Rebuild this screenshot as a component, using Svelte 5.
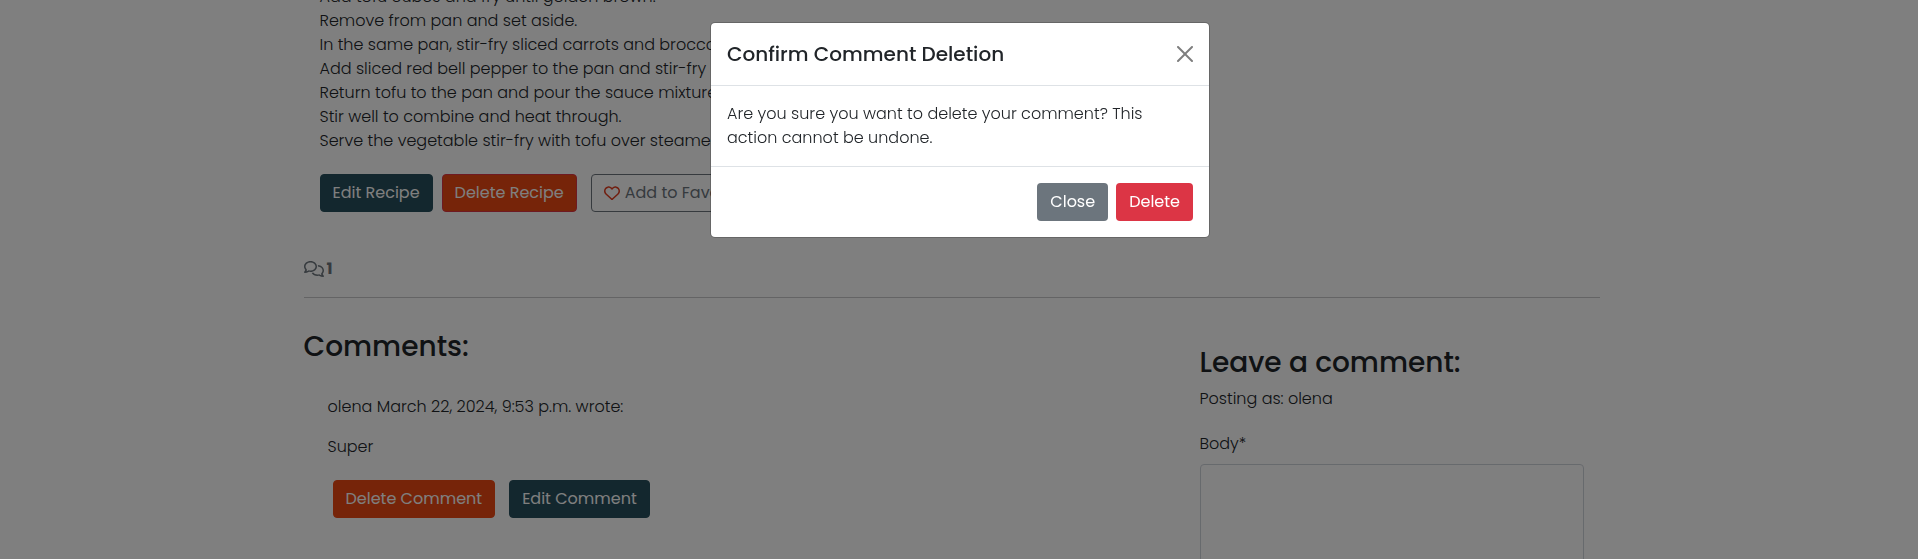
<script>
  const steps = [
    'Add tofu cubes and fry until golden brown.',
    'Remove from pan and set aside.',
    'In the same pan, stir-fry sliced carrots and broccoli.',
    'Add sliced red bell pepper to the pan and stir-fry again.',
    'Return tofu to the pan and pour the sauce mixture over.',
    'Stir well to combine and heat through.',
    'Serve the vegetable stir-fry with tofu over steamed rice.'
  ];
  let open = $state(true);
  let body = $state('');
  const close = () => (open = false);
</script>

<div class="page">
  <main class="container">
    <section class="recipe">
      {#each steps as step}
        <p>{step}</p>
      {/each}
      <div class="actions">
        <button class="btn teal">Edit Recipe</button>
        <button class="btn orange outlined">Delete Recipe</button>
        <button class="btn outline">
          <svg class="heart" viewBox="0 0 512 512" aria-hidden="true"><path d="M225.8 468.2l-2.5-2.3L48.1 303.2C17.4 274.7 0 234.7 0 192.8v-3.3c0-70.4 50-130.8 119.2-144C158.6 37.9 198.9 47 231 69.6c9 6.4 17.4 13.8 25 22.3c4.2-4.8 8.7-9.2 13.5-13.3c3.7-3.2 7.5-6.2 11.5-9C313.1 47 353.4 37.9 392.8 45.4C462 58.6 512 119.1 512 189.5v3.3c0 41.9-17.4 81.9-48.1 110.4L288.7 465.9l-2.5 2.3c-8.2 7.6-19 11.9-30.2 11.9s-22-4.2-30.2-11.9zM239.1 145c-.4-.3-.7-.7-1-1.1l-17.8-20l-.1-.1c-23.1-25.9-58-37.7-92-31.2C81.6 101.5 48 142.1 48 189.5v3.3c0 28.5 11.9 55.8 32.8 75.2L256 430.7 431.2 268c20.9-19.4 32.8-46.7 32.8-75.2v-3.3c0-47.3-33.6-88-80.1-96.9c-34-6.5-69 5.4-92 31.2l-.1 .1l-17.8 20c-.3 .4-.7 .7-1 1.1c-4.5 4.5-10.6 7-16.9 7s-12.4-2.5-16.9-7z" /></svg>
          Add to Favourites
        </button>
      </div>
    </section>

    <div class="count">
      <svg class="bubbles" viewBox="0 0 640 512" aria-hidden="true"><path d="M88.2 309.1c9.8-18.3 6.8-40.8-7.5-55.8C59.4 230.9 48 204 48 176c0-63.5 63.8-128 160-128s160 64.5 160 128s-63.8 128-160 128c-13.1 0-25.8-1.3-37.8-3.6c-10.4-2-21.2-.6-30.7 4.2c-4.1 2.1-8.3 4.1-12.6 6c-16 7.2-32.9 13.5-49.9 18c2.8-4.6 5.4-9.1 7.9-13.6c1.1-1.9 2.2-3.9 3.2-5.9zM0 176c0 41.8 17.2 80.1 45.9 110.3c-.9 1.7-1.9 3.5-2.8 5.1c-10.3 18.4-22.3 36.5-36.6 52.1c-6.6 7-8.3 17.2-4.6 25.9C5.8 378.3 14.4 384 24 384c43 0 86.5-13.3 122.7-29.7c4.8-2.2 9.6-4.5 14.2-6.8c15.1 3 30.9 4.5 47.1 4.5c114.9 0 208-78.8 208-176S322.9 0 208 0S0 78.8 0 176zM432 480c16.2 0 31.9-1.6 47.1-4.5c4.6 2.3 9.4 4.6 14.2 6.8C529.5 498.7 573 512 616 512c9.6 0 18.2-5.7 22-14.5c3.8-8.8 2-19-4.6-25.9c-14.2-15.6-26.2-33.7-36.6-52.1c-.9-1.7-1.9-3.4-2.8-5.1C622.8 384.1 640 345.8 640 304c0-94.4-87.9-171.5-198.2-175.8c4.1 15.2 6.2 31.2 6.2 47.8l0 .6c87.2 6.7 144 67.5 144 127.4c0 28-11.4 54.9-32.7 77.2c-14.3 15-17.3 37.6-7.5 55.8c1.1 2 2.2 4 3.2 5.9c2.5 4.5 5.2 9 7.9 13.6c-17-4.5-33.9-10.7-49.9-18c-4.3-1.9-8.5-3.9-12.6-6c-9.5-4.8-20.3-6.2-30.7-4.2c-12.1 2.4-24.8 3.6-37.8 3.6c-61.7 0-110-26.5-136.8-62.3c-16 5.4-32.8 9.4-50 11.8C279 439.8 350 480 432 480z" /></svg>
      <strong>1</strong>
    </div>
    <hr />

    <div class="row">
      <section class="comments">
        <h3>Comments:</h3>
        <article>
          <p>olena March 22, 2024, 9:53 p.m. wrote:</p>
          <p>Super</p>
          <div class="comment-actions">
            <button class="btn orange" onclick={() => (open = true)}>Delete Comment</button>
            <button class="btn teal">Edit Comment</button>
          </div>
        </article>
      </section>
      <form class="leave">
        <h3>Leave a comment:</h3>
        <p>Posting as: olena</p>
        <label for="body">Body*</label>
        <textarea id="body" rows="10" bind:value={body}></textarea>
      </form>
    </div>
  </main>
</div>

{#if open}
  <div class="backdrop">
    <div class="modal" role="dialog" aria-modal="true" aria-labelledby="modal-title">
      <header>
        <h5 id="modal-title">Confirm Comment Deletion</h5>
        <button class="x" aria-label="Close dialog" onclick={close}>
          <svg viewBox="0 0 16 16" aria-hidden="true"><path d="M.293.293a1 1 0 0 1 1.414 0L8 6.586 14.293.293a1 1 0 1 1 1.414 1.414L9.414 8l6.293 6.293a1 1 0 0 1-1.414 1.414L8 9.414l-6.293 6.293a1 1 0 0 1-1.414-1.414L6.586 8 .293 1.707a1 1 0 0 1 0-1.414z" /></svg>
        </button>
      </header>
      <div class="modal-body">
        Are you sure you want to delete your comment? This action cannot be undone.
      </div>
      <footer>
        <button class="btn grey" onclick={close}>Close</button>
        <button class="btn red">Delete</button>
      </footer>
    </div>
  </div>
{/if}

<style>
  :global(body) {
    margin: 0;
    background: #fff;
    color: #212529;
    font: 300 16px/24px Poppins, Inter, sans-serif;
  }
  .page, .page *, .backdrop, .backdrop * { box-sizing: border-box; }
  .page {
    height: 100vh;
    overflow: hidden;
    padding-right: 15px;
  }
  .container {
    max-width: 1320px;
    margin: -15px auto 0;
    padding: 0 12px;
  }
  p, h3, h5 { margin: 0; }
  h3 { font-size: 28px; line-height: 34px; font-weight: 500; }
  .recipe { padding: 0 16px; }
  .actions { display: flex; gap: 9px; margin-top: 21px; }
  .btn {
    height: 38px;
    padding: 0 12px;
    border: 1px solid transparent;
    border-radius: 4px;
    color: #fff;
    font: 400 16px/24px Poppins, Inter, sans-serif;
    white-space: nowrap;
    cursor: pointer;
  }
  .teal { background: #264e5c; border-color: #264e5c; }
  .orange { background: #ec4812; border-color: #ec4812; }
  .outlined { border-color: #dc3545; }
  .outline {
    display: flex;
    align-items: center;
    gap: 5px;
    margin-left: 5px;
    background: transparent;
    border-color: #6c757d;
    color: #6c757d;
  }
  .grey { background: #6c757d; }
  .red { background: #dc3545; }
  .heart { width: 16px; height: 16px; fill: #e23c1e; }
  .count {
    display: flex;
    align-items: center;
    gap: 3px;
    margin-top: 45px;
    color: #6c757d;
  }
  .count strong { font-weight: 700; }
  .bubbles { width: 20px; height: 16px; fill: currentColor; }
  hr {
    height: 1px;
    margin: 16px 0 0;
    border: 0;
    background: #c8c9ca;
  }
  .row { display: grid; grid-template-columns: 2fr 1fr; }
  .comments { padding-top: 32px; }
  article { padding: 31px 24px 0; }
  article p { margin-bottom: 16px; }
  .comment-actions { display: flex; gap: 14px; padding: 5px 5px 0; }
  .leave { padding: 48px 16px 0 32px; }
  .leave p { margin-top: 7px; }
  .leave label { display: block; margin: 21px 0 8px; }
  textarea {
    display: block;
    width: 100%;
    padding: 6px 12px;
    border: 1px solid #ced4da;
    border-radius: 4px;
    background: #fff;
    font: inherit;
    resize: vertical;
  }
  .backdrop {
    position: fixed;
    inset: 0;
    padding: 22px 0 0 2px;
    background: rgba(0, 0, 0, 0.5);
  }
  .modal {
    max-width: 500px;
    margin: 0 auto;
    border: 1px solid rgba(0, 0, 0, 0.2);
    border-radius: 5px;
    background: #fff;
    background-clip: padding-box;
  }
  header, footer { display: flex; align-items: center; padding: 16px; }
  header { justify-content: space-between; border-bottom: 1px solid #dee2e6; }
  h5 { font-size: 20px; line-height: 30px; font-weight: 500; }
  .x {
    display: flex;
    padding: 0;
    border: 0;
    background: none;
    opacity: 0.5;
    cursor: pointer;
  }
  .x svg { width: 16px; height: 16px; }
  .modal-body { padding: 16px; }
  footer { justify-content: flex-end; gap: 8px; border-top: 1px solid #dee2e6; }
</style>
